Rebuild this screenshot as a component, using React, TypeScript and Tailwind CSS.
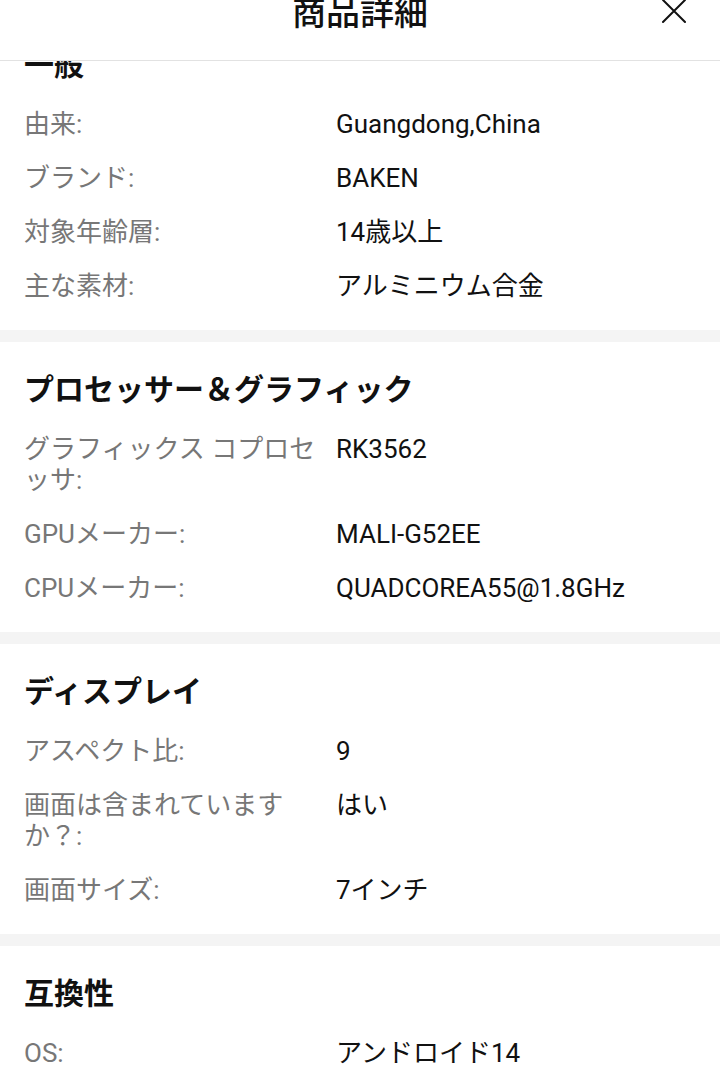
import React from 'react';

type Spec = { label: string; value: string };
type Section = { title: string; rows: Spec[] };

const sections: Section[] = [
  {
    title: '一般',
    rows: [
      { label: '由来:', value: 'Guangdong,China' },
      { label: 'ブランド:', value: 'BAKEN' },
      { label: '対象年齢層:', value: '14歳以上' },
      { label: '主な素材:', value: 'アルミニウム合金' },
    ],
  },
  {
    title: 'プロセッサー＆グラフィック',
    rows: [
      { label: 'グラフィックス コプロセッサ:', value: 'RK3562' },
      { label: 'GPUメーカー:', value: 'MALI-G52EE' },
      { label: 'CPUメーカー:', value: 'QUADCOREA55@1.8GHz' },
    ],
  },
  {
    title: 'ディスプレイ',
    rows: [
      { label: 'アスペクト比:', value: '9' },
      { label: '画面は含まれていますか？:', value: 'はい' },
      { label: '画面サイズ:', value: '7インチ' },
    ],
  },
  {
    title: '互換性',
    rows: [{ label: 'OS:', value: 'アンドロイド14' }],
  },
];

function SpecSection({ section, first }: { section: Section; first?: boolean }) {
  return (
    <section className={first ? '-mt-[44px] pt-[28px] pb-[17px]' : 'pt-[28px] pb-[17px]'}>
      <h2 className="px-6 text-[30px] leading-[40px] font-bold text-[#111] mb-[12px]">
        {section.title}
      </h2>
      <dl>
        {section.rows.map((r) => (
          <div key={r.label} className="grid grid-cols-[300px_1fr] gap-x-3 px-6 py-[11.5px]">
            <dt className="text-[26px] leading-[31px] text-[#777]">{r.label}</dt>
            <dd className="text-[26px] leading-[31px] text-[#111]">{r.value}</dd>
          </div>
        ))}
      </dl>
    </section>
  );
}

export default function App() {
  return (
    <div
      className="w-[720px] h-[1068px] overflow-hidden bg-white"
      style={{ fontFamily: 'Roboto, "Noto Sans CJK JP", sans-serif' }}
    >
      <header className="h-[61px] border-b border-[#e2e2e2] overflow-hidden">
        <div className="-mt-[10px] h-[42px] grid grid-cols-[1fr_auto_1fr] items-center">
          <div />
          <h1
            className="text-[34px] leading-[42px] font-medium text-[#111]"
            style={{ fontFamily: '"Noto Sans CJK JP", sans-serif' }}
          >
            商品詳細
          </h1>
          <div className="flex justify-end pr-[33px]">
            <button aria-label="閉じる" className="text-[#111]">
              <svg width="26" height="26" viewBox="0 0 26 26" fill="none" stroke="currentColor" strokeWidth="2" strokeLinecap="round">
                <path d="M2 2 L24 24 M24 2 L2 24" />
              </svg>
            </button>
          </div>
        </div>
      </header>
      <div className="overflow-hidden">
        {sections.map((s, i) => (
          <React.Fragment key={s.title}>
            {i > 0 && <div className="h-[12px] bg-[#f4f4f4]" />}
            <SpecSection section={s} first={i === 0} />
          </React.Fragment>
        ))}
      </div>
    </div>
  );
}
